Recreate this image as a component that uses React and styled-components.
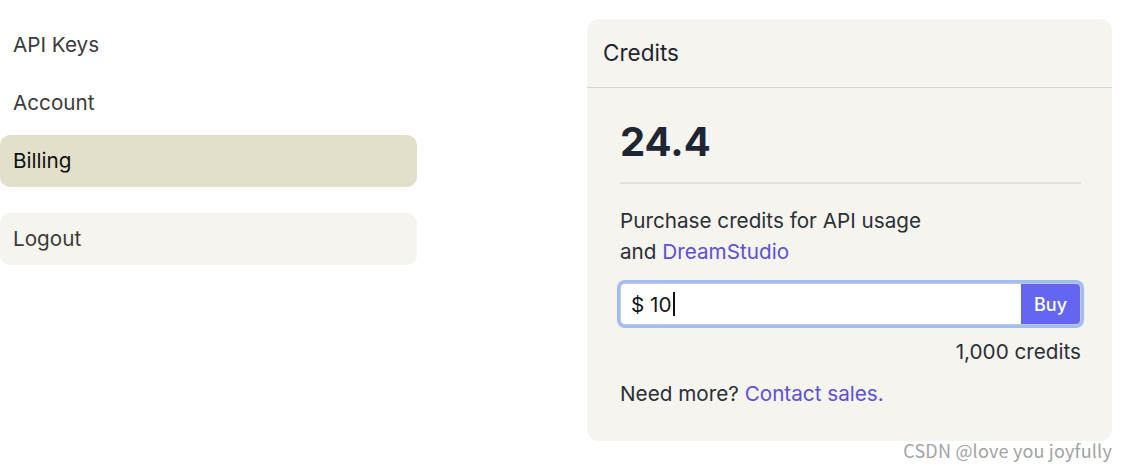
import React from 'react';
import styled, { createGlobalStyle } from 'styled-components';

const GlobalStyle = createGlobalStyle`
  html, body {
    margin: 0;
    padding: 0;
    background: #ffffff;
    font-family: Inter, "Noto Sans", sans-serif;
  }
`;

const Page = styled.div`
  position: relative;
  display: flex;
  align-items: flex-start;
  gap: 170px;
  width: 1128px;
  height: 471px;
  padding-top: 19px;
  box-sizing: border-box;
  overflow: hidden;
`;

const Nav = styled.nav`
  display: flex;
  flex-direction: column;
  width: 417px;
`;

const NavItem = styled.div`
  display: flex;
  align-items: center;
  height: 52px;
  padding: 0 13px 2px;
  box-sizing: border-box;
  margin-bottom: ${p => (p.$gapAfter ? '26px' : '6px')};
  border-radius: 10px;
  font-size: 20.7px;
  color: ${p => (p.$active ? '#111111' : '#3b3b3b')};
  background: ${p => p.$bg || 'transparent'};
`;

const Card = styled.section`
  width: 525px;
  background: #f5f4ee;
  border-radius: 12px;
  color: #2b2f36;
`;

const CardHeader = styled.div`
  display: flex;
  align-items: center;
  height: 67px;
  padding: 0 16px 1px;
  border-bottom: 1px solid #d6d4d8;
  font-size: 22.5px;
  color: #1f2430;
`;

const CardBody = styled.div`
  display: flex;
  flex-direction: column;
  padding: 29px 31px 32px 33px;
`;

const Amount = styled.div`
  font-size: 40px;
  font-weight: 700;
  line-height: 50px;
  color: #1e2633;
`;

const Divider = styled.hr`
  margin: 15px 0 21px;
  border: none;
  height: 2px;
  background: #e3e2e2;
`;

const Text = styled.p`
  margin: 0;
  font-size: 20.7px;
  line-height: 31px;
  color: #2b2f36;
  text-align: ${p => p.$align || 'left'};
`;

const Link = styled.a`
  color: #5b52d6;
  text-decoration: none;
`;

const InputGroup = styled.div`
  display: flex;
  height: 40px;
  margin: 16px 0 11px;
  border: 1px solid #c9c9cf;
  border-radius: 5px;
  background: #ffffff;
  box-shadow: 0 0 0 3px #9dbdf4;
  overflow: hidden;
`;

const Field = styled.div`
  flex: 1;
  display: flex;
  align-items: center;
  padding-left: 10px;
  font-size: 20.7px;
  color: #15171c;
`;

const Caret = styled.span`
  display: inline-block;
  width: 2px;
  height: 24px;
  margin-left: 1px;
  background: #111;
`;

const BuyButton = styled.button`
  width: 59px;
  border: none;
  background: #6366f0;
  color: #ffffff;
  font-family: Inter, sans-serif;
  font-size: 18px;
  font-weight: 500;
  padding: 0;
`;

const Spacer = styled.div`
  height: 11px;
`;

const Watermark = styled.div`
  position: absolute;
  right: 16px;
  bottom: 8px;
  font-family: "Noto Sans CJK SC", "Liberation Sans", sans-serif;
  font-size: 18px;
  color: #a3a3a3;
  letter-spacing: 0.2px;
`;

export default function App() {
  return (
    <>
      <GlobalStyle />
      <Page>
        <Nav>
          <NavItem>API Keys</NavItem>
          <NavItem>Account</NavItem>
          <NavItem $active $bg="#e2e0cb" $gapAfter>Billing</NavItem>
          <NavItem $bg="#f5f4ee">Logout</NavItem>
        </Nav>
        <Card>
          <CardHeader>Credits</CardHeader>
          <CardBody>
            <Amount>24.4</Amount>
            <Divider />
            <Text>
              Purchase credits for API usage
              <br />
              and <Link>DreamStudio</Link>
            </Text>
            <InputGroup>
              <Field>
                $ 10<Caret />
              </Field>
              <BuyButton>Buy</BuyButton>
            </InputGroup>
            <Text $align="right">1,000 credits</Text>
            <Spacer />
            <Text>
              Need more? <Link>Contact sales.</Link>
            </Text>
          </CardBody>
        </Card>
        <Watermark>CSDN @love you joyfully</Watermark>
      </Page>
    </>
  );
}
